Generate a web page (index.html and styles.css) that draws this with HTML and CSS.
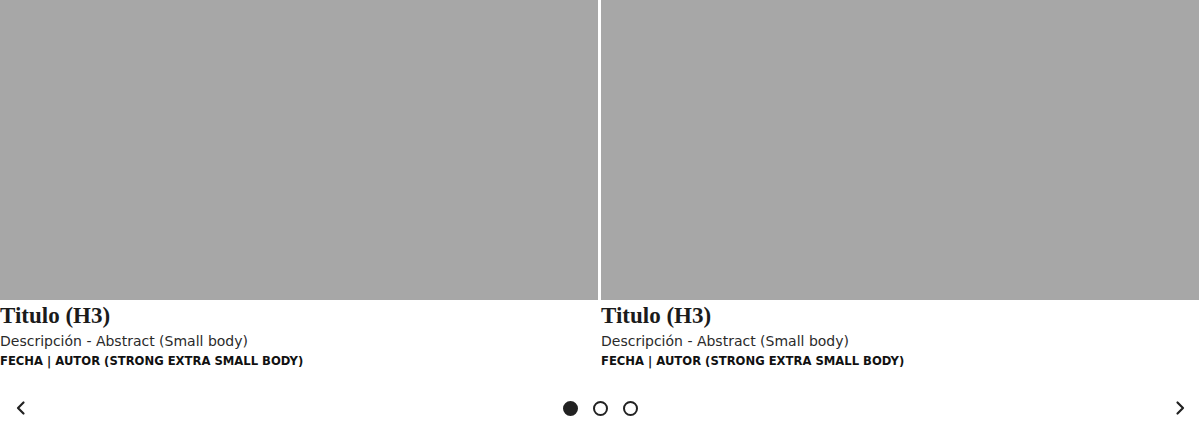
FILE: index.html
```html
<!DOCTYPE html>
<html lang="es">
<head>
<meta charset="utf-8">
<link rel="stylesheet" href="styles.css">
</head>
<body>
<div class="carousel">
  <div class="cards">
    <article class="card">
      <div class="thumb"></div>
      <h3 class="title">Titulo (H3)</h3>
      <p class="desc">Descripción - Abstract (Small body)</p>
      <p class="meta">FECHA | AUTOR (STRONG EXTRA SMALL BODY)</p>
    </article>
    <article class="card">
      <div class="thumb"></div>
      <h3 class="title">Titulo (H3)</h3>
      <p class="desc">Descripción - Abstract (Small body)</p>
      <p class="meta">FECHA | AUTOR (STRONG EXTRA SMALL BODY)</p>
    </article>
  </div>
  <div class="controls">
    <button class="arrow" aria-label="Anterior">
      <svg width="16" height="16" viewBox="0 0 16 16"><path d="M10.5 2.5 5 8l5.5 5.5" fill="none" stroke="#222" stroke-width="2.2" stroke-linecap="round" stroke-linejoin="round"/></svg>
    </button>
    <div class="dots">
      <span class="dot active"></span>
      <span class="dot"></span>
      <span class="dot"></span>
    </div>
    <button class="arrow" aria-label="Siguiente">
      <svg width="16" height="16" viewBox="0 0 16 16"><path d="M5.5 2.5 11 8l-5.5 5.5" fill="none" stroke="#222" stroke-width="2.2" stroke-linecap="round" stroke-linejoin="round"/></svg>
    </button>
  </div>
</div>
</body>
</html>
```
FILE: styles.css
```css
* { box-sizing: border-box; }
body {
  margin: 0;
  background: #fff;
  color: #1b1b1b;
  font-family: "DejaVu Sans", "Noto Sans", sans-serif;
}
.carousel { width: 1200px; }
.cards {
  display: grid;
  grid-template-columns: 598px 598px;
  column-gap: 3px;
}
.card { display: flex; flex-direction: column; }
.thumb { height: 300px; background: #a7a7a7; }
.title {
  margin: 3px 0 0;
  font-family: "Liberation Serif", "DejaVu Serif", serif;
  font-weight: bold;
  font-size: 23px;
  line-height: 26px;
  color: #1b1b1b;
}
.desc {
  margin: 3px 0 0;
  font-size: 14px;
  line-height: 18px;
  color: #2a2a2a;
}
.meta {
  margin: 4px 0 0;
  font-size: 11.6px;
  font-weight: bold;
  line-height: 15px;
  color: #111;
}
.controls {
  margin-top: 24px;
  height: 30px;
  display: flex;
  align-items: center;
  justify-content: space-between;
  padding: 0 12px 0 13px;
}
.arrow {
  background: none;
  border: 0;
  padding: 0;
  width: 16px;
  height: 16px;
  display: flex;
}
.dots { display: flex; gap: 15px; }
.dot {
  width: 15px;
  height: 15px;
  border-radius: 50%;
  border: 2px solid #222;
}
.dot.active { background: #222; }
```
